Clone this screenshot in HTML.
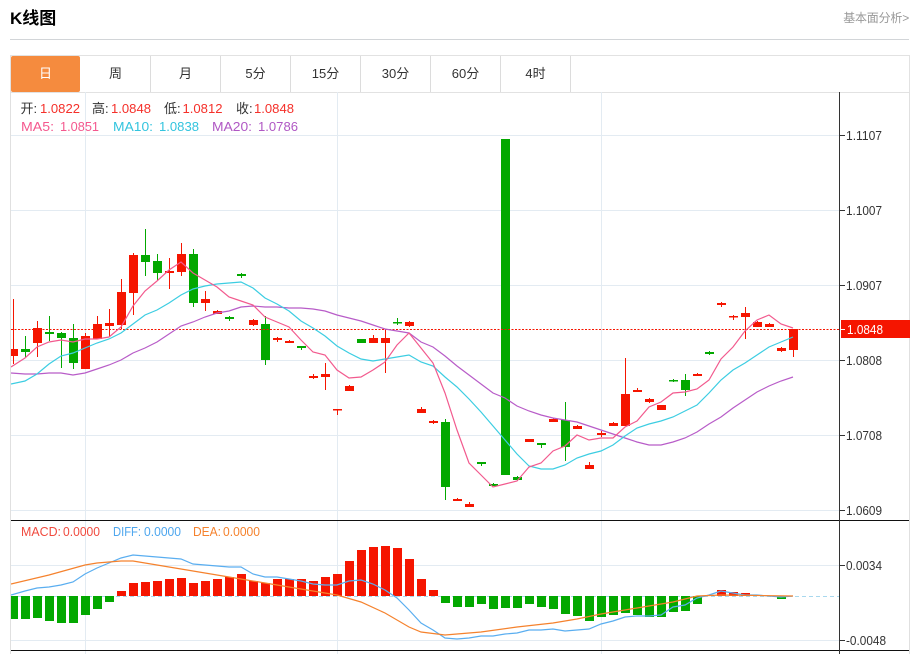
<!DOCTYPE html>
<html lang="zh">
<head>
<meta charset="utf-8">
<title>K线图</title>
<style>
html,body{margin:0;padding:0;background:#fff;width:913px;height:654px;overflow:hidden}
body{position:relative;font-family:"Liberation Sans","Noto Sans CJK SC",sans-serif}
.title{position:absolute;left:10px;top:6px;font-size:17px;font-weight:bold;color:#000;line-height:26px}
.more{position:absolute;right:4px;top:9px;font-size:12px;letter-spacing:-.2px;color:#999;line-height:18px}
.hr{position:absolute;left:10px;top:39px;width:899px;height:1px;background:#d2d5d8}
.tabs{position:absolute;left:10px;top:55px;width:898px;height:36px;border:1px solid #e2e2e2;box-sizing:content-box;display:flex}
.tabs div{width:70px;height:36px;box-sizing:border-box;border-right:1px solid #dcdcdc;text-align:center;font-size:13px;line-height:36px;color:#333}
.tabs div.on{width:69px;background:#f58b3e;color:#fff;border-right:0;border-radius:2px;margin-right:1px}
svg{position:absolute;left:0;top:0}
text{font-family:"Liberation Sans","Noto Sans CJK SC",sans-serif}
</style>
</head>
<body>
<div class="title">K线图</div>
<div class="more">基本面分析&gt;</div>
<div class="hr"></div>
<div class="tabs"><div class="on">日</div><div>周</div><div>月</div><div>5分</div><div>15分</div><div>30分</div><div>60分</div><div>4时</div></div>
<svg width="913" height="654" viewBox="0 0 913 654">
<defs><clipPath id="c"><rect x="11" y="92" width="828" height="562"/></clipPath></defs>
<path d="M10.5 92V654M909.5 92V654" stroke="#e0e0e0" fill="none"/>
<path d="M11 135.5H839M11 210.5H839M11 285.5H839M11 360.5H839M11 435.5H839M11 510.5H839M11 565.5H839M11 640.5H839M85.5 92V654M337.5 92V654M601.5 92V654" stroke="#e3ebf2" fill="none"/>
<g clip-path="url(#c)">
<!-- wicks red -->
<path fill="#f51500" d="M13 299h1v65h-1zM37 321h1v36h-1zM85 333h1v36h-1zM97 316h1v23h-1zM109 309h1v28h-1zM121 279h1v50h-1zM133 253h1v62h-1zM169 258h1v31h-1zM181 243h1v33h-1zM205 291h1v20h-1zM217 310h1v4h-1zM253 319h1v7h-1zM277 337h1v5h-1zM289 340h1v3h-1zM313 374h1v5h-1zM325 363h1v27h-1zM337 409h1v6h-1zM349 385h1v6h-1zM373 335h1v8h-1zM385 329h1v44h-1zM409 321h1v6h-1zM421 407h1v6h-1zM433 420h1v4h-1zM457 498h1v3h-1zM469 502h1v5h-1zM529 439h1v3h-1zM553 418h1v4h-1zM577 425h1v4h-1zM589 462h1v7h-1zM601 431h1v6h-1zM613 422h1v4h-1zM625 358h1v68h-1zM637 388h1v4h-1zM649 398h1v5h-1zM661 405h1v5h-1zM697 373h1v3h-1zM721 302h1v5h-1zM733 315h1v5h-1zM745 307h1v32h-1zM757 321h1v6h-1zM769 323h1v4h-1zM781 347h1v5h-1zM793 329h1v28h-1z"/>
<!-- bodies red -->
<path fill="#f51500" d="M9 349h9v7H9zM33 328h9v15h-9zM81 336h9v33h-9zM93 324h9v15h-9zM105 323h9v3h-9zM117 292h9v33h-9zM129 255h9v38h-9zM165 271h9v2h-9zM177 254h9v18h-9zM201 299h9v4h-9zM213 311h9v3h-9zM249 320h9v5h-9zM273 338h9v2h-9zM285 341h9v2h-9zM309 376h9v2h-9zM321 374h9v3h-9zM333 409h9v1.5h-9zM345 386h9v5h-9zM369 338h9v5h-9zM381 338h9v5h-9zM405 322h9v4h-9zM417 409h9v4h-9zM429 421h9v2h-9zM453 499h9v2h-9zM465 504h9v3h-9zM525 439h9v3h-9zM549 419h9v3h-9zM573 426h9v3h-9zM585 465h9v4h-9zM597 433h9v2h-9zM609 423h9v3h-9zM621 394h9v32h-9zM633 390h9v2h-9zM645 399h9v3h-9zM657 405h9v5h-9zM693 374h9v2h-9zM717 303h9v2h-9zM729 316h9v1.5h-9zM741 313h9v4h-9zM753 322h9v5h-9zM765 324h9v3h-9zM777 348h9v3h-9zM789 329h9v21h-9z"/>
<!-- wicks green -->
<path fill="#03a800" d="M25 336h1v22h-1zM49 316h1v25h-1zM61 332h1v36h-1zM73 324h1v45h-1zM145 229h1v47h-1zM157 254h1v26h-1zM193 249h1v58h-1zM229 316h1v5h-1zM241 273h1v5h-1zM265 316h1v49h-1zM301 346h1v4h-1zM397 318h1v7h-1zM445 419h1v81h-1zM481 462h1v4h-1zM493 483h1v3h-1zM517 476h1v5h-1zM541 443h1v5h-1zM565 402h1v59h-1zM673 379h1v3h-1zM685 374h1v22h-1zM709 351h1v4h-1z"/>
<!-- bodies green -->
<path fill="#03a800" d="M21 349h9v3h-9zM45 332h9v2h-9zM57 333h9v5h-9zM69 338h9v25h-9zM141 255h9v7h-9zM153 261h9v12h-9zM189 254h9v49h-9zM225 317h9v2h-9zM237 274h9v2h-9zM261 324h9v36h-9zM297 346h9v2h-9zM357 339h9v4h-9zM393 322h9v1.5h-9zM441 422h9v65h-9zM477 462h9v2h-9zM489 484h9v2h-9zM501 139h9v336h-9zM513 477h9v3h-9zM537 443h9v2h-9zM561 420h9v27h-9zM669 380h9v1.5h-9zM681 380h9v10h-9zM705 352h9v2h-9z"/>
<path d="M11 329.5H839" stroke="#f51500" stroke-width="1" stroke-dasharray="2 1.5" fill="none"/>
<!-- MA20 -->
<polyline fill="none" stroke="#b85cc8" stroke-width="1.2" points="11,373 25,374 37,374 49,373 61,373 73,375 85,373 97,369 109,365 121,360 133,353 145,348 157,342 169,334 181,326 193,322 205,317 217,313 229,311 241,307 253,306 265,307 277,307 289,308 301,308 313,309 325,311 337,315 349,318 361,321 373,325 385,329 397,331 409,333 421,342 433,347 445,356 457,366 469,375 481,384 493,393 505,398 517,406 529,411 541,415 553,418 565,420 577,422 589,426 601,430 613,434 625,438 637,442 649,445 661,445 673,442 685,438 697,432 709,424 721,417 733,408 745,400 757,392 769,386 781,381 793,377"/>
<!-- MA10 -->
<polyline fill="none" stroke="#3ccde2" stroke-width="1.2" points="11,384 25,381 37,374 49,364 61,356 73,353 85,348 97,343 109,339 121,333 133,324 145,315 157,310 169,303 181,295 193,289 205,286 217,284 229,283 241,282 253,288 265,298 277,304 289,311 301,321 313,328 325,336 337,346 349,353 361,359 373,361 385,359 397,357 409,355 421,362 433,366 445,377 457,387 469,399 481,412 493,426 505,440 517,454 529,466 541,469 553,469 565,465 577,458 589,454 601,451 613,445 625,436 637,428 649,424 661,421 673,417 685,411 697,405 709,393 721,380 733,370 745,363 757,355 769,347 781,342 793,337"/>
<!-- MA5 -->
<polyline fill="none" stroke="#f25a8e" stroke-width="1.2" points="11,367 25,358 37,347 49,342 61,340 73,342 85,339 97,339 109,337 121,327 133,306 145,291 157,281 169,270 181,262 193,273 205,280 217,287 229,297 241,301 253,305 265,317 277,322 289,327 301,340 313,352 325,355 337,370 349,378 361,377 373,370 385,362 397,345 409,333 421,348 433,363 445,393 457,430 469,463 481,475 493,487 505,484 517,481 529,467 541,463 553,451 565,446 577,435 589,440 601,438 613,438 625,427 637,421 649,407 661,402 673,393 685,392 697,389 709,380 721,359 733,347 745,331 757,320 769,315 781,324 793,328"/>
<!-- MACD baseline -->
<path d="M11 596.5H839" stroke="#a8d8ee" stroke-dasharray="4 3" fill="none"/>
<path fill="#f51500" d="M117 591h9v5h-9zM129 583h9v13h-9zM141 582h9v14h-9zM153 581h9v15h-9zM165 579h9v17h-9zM177 578h9v18h-9zM189 583h9v13h-9zM201 581h9v15h-9zM213 579h9v17h-9zM225 577h9v19h-9zM237 574h9v22h-9zM249 581h9v15h-9zM261 583h9v13h-9zM273 579h9v17h-9zM285 579h9v17h-9zM297 579h9v17h-9zM309 581h9v15h-9zM321 577h9v19h-9zM333 574h9v22h-9zM345 561h9v35h-9zM357 550h9v46h-9zM369 547h9v49h-9zM381 546h9v50h-9zM393 548h9v48h-9zM405 559h9v37h-9zM417 579h9v17h-9zM429 590h9v6h-9zM705 595h9v1h-9zM717 590h9v6h-9zM729 592h9v4h-9zM741 593h9v3h-9zM753 595h9v1h-9z"/>
<path fill="#03a800" d="M9 596h9v23H9zM21 596h9v23h-9zM33 596h9v22h-9zM45 596h9v25h-9zM57 596h9v27h-9zM69 596h9v27h-9zM81 596h9v19h-9zM93 596h9v13h-9zM105 596h9v6h-9zM441 596h9v7h-9zM453 596h9v11h-9zM465 596h9v11h-9zM477 596h9v8h-9zM489 596h9v13h-9zM501 596h9v12h-9zM513 596h9v12h-9zM525 596h9v8h-9zM537 596h9v11h-9zM549 596h9v13h-9zM561 596h9v18h-9zM573 596h9v20h-9zM585 596h9v25h-9zM597 596h9v21h-9zM609 596h9v19h-9zM621 596h9v17h-9zM633 596h9v19h-9zM645 596h9v21h-9zM657 596h9v21h-9zM669 596h9v16h-9zM681 596h9v15h-9zM693 596h9v8h-9zM777 596h9v3h-9z"/>
<polyline fill="none" stroke="#5aaef0" stroke-width="1.2" points="11,595 25,591 37,588 49,587 61,585 73,582 85,574 97,568 109,563 121,558 133,555 145,556 157,557 169,558 181,559 193,564 205,565 217,566 229,567 241,567 253,574 265,577 277,577 289,579 301,581 313,584 325,585 337,585 349,581 361,580 373,584 385,590 397,598 409,610 421,623 433,630 445,638 457,639 469,638 481,636 493,636 505,634 517,633 529,630 541,630 553,629 565,631 577,630 589,629 601,624 613,621 625,617 637,616 649,616 661,615 673,607 685,605 697,598 709,595 721,591 733,593 745,595 757,595 769,596 781,597 793,596"/>
<polyline fill="none" stroke="#f5822d" stroke-width="1.2" points="11,584 49,575 85,565 97,563 121,561 133,561 157,565 193,571 229,577 265,583 301,589 337,595 361,602 385,613 409,627 421,632 445,635 481,632 517,627 553,623 577,619 601,614 637,608 673,602 697,596 721,595 793,596"/>
</g>
<path d="M11 520.5H909M11 650.5H909" stroke="#111" fill="none"/>
<path d="M839.5 92V654" stroke="#333" fill="none"/>
<path d="M840 135.5h5M840 210.5h5M840 285.5h5M840 360.5h5M840 435.5h5M840 510.5h5M840 565.5h5M840 640.5h5" stroke="#333" fill="none"/>
<g font-size="13" fill="#333">
<text x="846" y="140" textLength="36" lengthAdjust="spacingAndGlyphs">1.1107</text>
<text x="846" y="215" textLength="36" lengthAdjust="spacingAndGlyphs">1.1007</text>
<text x="846" y="290" textLength="36" lengthAdjust="spacingAndGlyphs">1.0907</text>
<text x="846" y="365" textLength="36" lengthAdjust="spacingAndGlyphs">1.0808</text>
<text x="846" y="440" textLength="36" lengthAdjust="spacingAndGlyphs">1.0708</text>
<text x="846" y="515" textLength="36" lengthAdjust="spacingAndGlyphs">1.0609</text>
<text x="846" y="570" textLength="36" lengthAdjust="spacingAndGlyphs">0.0034</text>
<text x="846" y="645" textLength="40" lengthAdjust="spacingAndGlyphs">-0.0048</text>
</g>
<rect x="841" y="320" width="69" height="18" fill="#f51500"/>
<rect x="841" y="329" width="4" height="1" fill="#fff"/>
<text x="847" y="334" font-size="13" fill="#fff" textLength="36" lengthAdjust="spacingAndGlyphs">1.0848</text>
<g font-size="13">
<text x="20.5" y="113" fill="#333">开:</text><text x="40" y="113" fill="#f5302a" textLength="40" lengthAdjust="spacingAndGlyphs">1.0822</text>
<text x="92" y="113" fill="#333">高:</text><text x="111" y="113" fill="#f5302a" textLength="40" lengthAdjust="spacingAndGlyphs">1.0848</text>
<text x="164" y="113" fill="#333">低:</text><text x="182.5" y="113" fill="#f5302a" textLength="40" lengthAdjust="spacingAndGlyphs">1.0812</text>
<text x="236" y="113" fill="#333">收:</text><text x="254" y="113" fill="#f5302a" textLength="40" lengthAdjust="spacingAndGlyphs">1.0848</text>
<text x="21" y="131" fill="#f4588e" textLength="33" lengthAdjust="spacingAndGlyphs">MA5:</text><text x="60" y="131" fill="#f4588e" textLength="39" lengthAdjust="spacingAndGlyphs">1.0851</text>
<text x="113" y="131" fill="#33c4de" textLength="40" lengthAdjust="spacingAndGlyphs">MA10:</text><text x="159" y="131" fill="#33c4de" textLength="40" lengthAdjust="spacingAndGlyphs">1.0838</text>
<text x="212" y="131" fill="#b058c4" textLength="40" lengthAdjust="spacingAndGlyphs">MA20:</text><text x="258" y="131" fill="#b058c4" textLength="40" lengthAdjust="spacingAndGlyphs">1.0786</text>
<text x="21" y="536" fill="#f04a3e" textLength="40" lengthAdjust="spacingAndGlyphs">MACD:</text><text x="63" y="536" fill="#f04a3e" textLength="37" lengthAdjust="spacingAndGlyphs">0.0000</text>
<text x="113" y="536" fill="#4da6ee" textLength="28" lengthAdjust="spacingAndGlyphs">DIFF:</text><text x="144" y="536" fill="#4da6ee" textLength="37" lengthAdjust="spacingAndGlyphs">0.0000</text>
<text x="193" y="536" fill="#f5822d" textLength="28" lengthAdjust="spacingAndGlyphs">DEA:</text><text x="223" y="536" fill="#f5822d" textLength="37" lengthAdjust="spacingAndGlyphs">0.0000</text>
</g>
</svg>
</body>
</html>
